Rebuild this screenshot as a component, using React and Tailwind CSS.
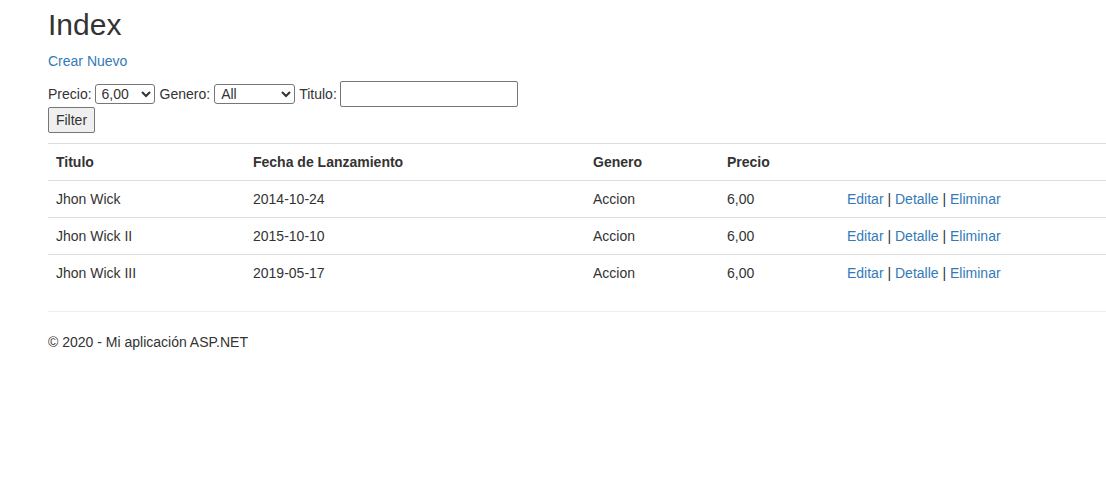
import React, { useState } from 'react';

const movies = [
  { id: 1, titulo: 'Jhon Wick', fecha: '2014-10-24', genero: 'Accion', precio: '6,00' },
  { id: 2, titulo: 'Jhon Wick II', fecha: '2015-10-10', genero: 'Accion', precio: '6,00' },
  { id: 3, titulo: 'Jhon Wick III', fecha: '2019-05-17', genero: 'Accion', precio: '6,00' },
];

const App = () => {
  const [precio, setPrecio] = useState('6,00');
  const [genero, setGenero] = useState('All');
  const [titulo, setTitulo] = useState('');

  return (
    <div
      className="min-h-[481px] bg-white pl-[48px] text-[14px] leading-[20px] text-[#333]"
      style={{ fontFamily: '"Liberation Sans", Arial, Helvetica, sans-serif' }}
    >
      <h2 className="pt-[8px] text-[30px] leading-[33px] font-normal">Index</h2>

      <p className="mt-[10px]">
        <a href="#" className="text-[#337ab7] hover:underline">Crear Nuevo</a>
      </p>

      <form className="mt-[10px]" onSubmit={(e) => e.preventDefault()}>
        <div className="flex h-[26px] items-center">
          <span>Precio:</span>
          <select
            value={precio}
            onChange={(e) => setPrecio(e.target.value)}
            className="ml-[3px] h-[20px] w-[60px] rounded-[3px] border border-[#767676] bg-white pl-[2px] text-[14px] leading-[18px]"
          >
            <option>6,00</option>
          </select>
          <span className="ml-[5px]">Genero:</span>
          <select
            value={genero}
            onChange={(e) => setGenero(e.target.value)}
            className="ml-[4px] h-[20px] w-[81px] rounded-[3px] border border-[#767676] bg-white pl-[2px] text-[14px] leading-[18px]"
          >
            <option>All</option>
            <option>Accion</option>
          </select>
          <span className="ml-[4px]">Titulo:</span>
          <input
            type="text"
            value={titulo}
            onChange={(e) => setTitulo(e.target.value)}
            className="ml-[3px] h-[26px] w-[178px] rounded-[2px] border border-[#767676] bg-white px-[2px]"
          />
        </div>
        <button
          type="submit"
          className="h-[26px] w-[47px] rounded-[2px] border border-[#767676] bg-[#efefef] text-[14px] leading-[20px] text-[#333]"
        >
          Filter
        </button>
      </form>

      <table className="mt-[10px] w-[1058px] table-fixed border-collapse">
        <colgroup>
          <col className="w-[197px]" />
          <col className="w-[340px]" />
          <col className="w-[134px]" />
          <col className="w-[120px]" />
          <col />
        </colgroup>
        <tbody>
          <tr>
            <th className="border-t border-[#ddd] p-[8px] text-left font-bold">Titulo</th>
            <th className="border-t border-[#ddd] p-[8px] text-left font-bold">Fecha de Lanzamiento</th>
            <th className="border-t border-[#ddd] p-[8px] text-left font-bold">Genero</th>
            <th className="border-t border-[#ddd] p-[8px] text-left font-bold">Precio</th>
            <th className="border-t border-[#ddd] p-[8px]"></th>
          </tr>
          {movies.map((m) => (
            <tr key={m.id}>
              <td className="border-t border-[#ddd] p-[8px]">{m.titulo}</td>
              <td className="border-t border-[#ddd] p-[8px]">{m.fecha}</td>
              <td className="border-t border-[#ddd] p-[8px]">{m.genero}</td>
              <td className="border-t border-[#ddd] p-[8px]">{m.precio}</td>
              <td className="border-t border-[#ddd] p-[8px]">
                <a href="#" className="text-[#337ab7]">Editar</a> |{' '}
                <a href="#" className="text-[#337ab7]">Detalle</a> |{' '}
                <a href="#" className="text-[#337ab7]">Eliminar</a>
              </td>
            </tr>
          ))}
        </tbody>
      </table>

      <hr className="mt-[20px] border-t border-[#eee]" />
      <footer>
        <p className="mt-[20px]">© 2020 - Mi aplicación ASP.NET</p>
      </footer>
    </div>
  );
};

export default App;
